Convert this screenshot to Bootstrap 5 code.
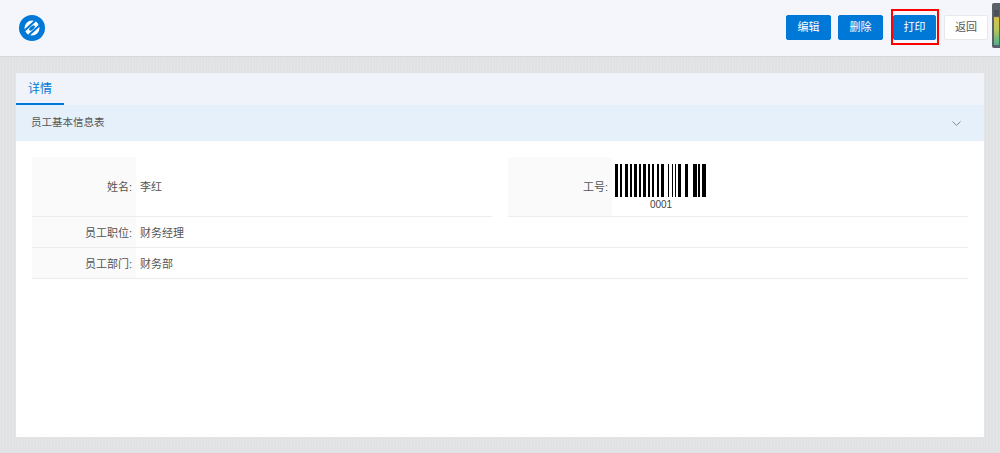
<!DOCTYPE html>
<html lang="zh-CN">
<head>
    <meta charset="UTF-8">
    <title>员工基本信息表</title>
    <link rel="stylesheet" href="https://cdn.jsdelivr.net/npm/bootstrap@5.3.0/dist/css/bootstrap.min.css">
    <style>
        html, body { height: 453px; overflow: hidden; }
        body {
            font-family: "Liberation Sans", "Noto Sans CJK SC", sans-serif;
            font-size: 11px;
            color: #555;
            background-color: #e2e3e5;
            background-image:
                repeating-linear-gradient(90deg, rgba(255,255,255,.10) 0 1px, transparent 1px 3px),
                repeating-linear-gradient(0deg, rgba(0,0,0,.012) 0 1px, transparent 1px 2px);
        }
        .top-bar { height: 57px; padding-top: 9px; background: #f4f6fb; border-bottom: 1px solid #d6d7d9; }
        .brand-logo { width: 26px; height: 26px; margin: 6px 0 0 19px; }
        .act-btn {
            width: 45px; height: 25px; padding: 0; font-size: 11px; line-height: 23px;
            border-radius: 2px; background: #0078d7; border: 1px solid #0078d7; color: #fff;
        }
        .act-gap { margin: 6px 7px 0 0; }
        .act-gap-wide { margin-right: 8px; }
        .act-outline {
            width: 44px; height: 25px; margin: 6px 4px 0 0; padding: 0; font-size: 11px; line-height: 23px;
            border-radius: 2px; background: #fff; border: 1px solid #e6e8ec; color: #555;
        }
        .print-mark { height: 36px; margin-right: 5px; padding: 4px 1px 3px 0; border: 2px solid #f00; }
        .print-mark .act-btn { display: block; width: 43px; }
        .meter {
            width: 8px; height: 45px; margin-top: -6px; background: #5a6068;
            border-radius: 2px 0 0 2px; padding: 7px 1px 3px 2px;
        }
        .meter-fill {
            height: 100%;
            background: linear-gradient(#4a5058 0 18%, #d5c04c 22%, #b9c65a 55%, #4fb08c 100%);
        }
        .sheet { margin: 16px 16px 0; height: 364px; background: #fff; }
        .tab-row { height: 32px; background: #f0f3f9; }
        .tab-on {
            width: 48px; height: 32px; padding-top: 1px; line-height: 30px; text-align: center;
            color: #0078d7; font-size: 12px; border-bottom: 2px solid #0078d7;
        }
        .sec-head { height: 36px; padding: 0 23px 0 15px; font-size: 10.500px; background: #e6f0fa; color: #555; }
        .form-wrap { padding: 16px 16px 0; }
        .info-row { border-bottom: 1px solid #ececec; }
        .info-label {
            width: 104px; flex: none; padding: 2px 4px 0 0; text-align: right;
            background: #fafafa; color: #555;
        }
        .info-val { padding: 2px 0 0 4px; color: #555; }
        .row-tall { height: 60px; }
        .row-std { height: 31px; }
        .code-num { margin-top: 2px; font-size: 10px; line-height: 11px; color: #444; text-align: center; width: 92px; }
        .code-wrap { padding: 7px 0 0 3px; }
    </style>
</head>
<body>
    <div class="top-bar d-flex align-items-start justify-content-between">
        <svg class="brand-logo" viewBox="0 0 26 26">
            <circle cx="13" cy="13" r="13" fill="#0078d7"/>
            <circle cx="13" cy="13" r="7.500" fill="#fff"/>
            <path d="M4 17 L16 6" stroke="#0078d7" stroke-width="2"/>
            <path d="M10 20 L22 9" stroke="#0078d7" stroke-width="2"/>
            <ellipse cx="13" cy="13" rx="3.500" ry="1.600" transform="rotate(-42 13 13)" fill="#0078d7"/>
        </svg>
        <div class="d-flex align-items-start">
            <button class="btn act-btn act-gap" type="button">编辑</button>
            <button class="btn act-btn act-gap act-gap-wide" type="button">删除</button>
            <div class="print-mark"><button class="btn act-btn" type="button">打印</button></div>
            <button class="btn act-outline" type="button">返回</button>
            <div class="meter"><div class="meter-fill"></div></div>
        </div>
    </div>

    <div class="sheet">
        <div class="tab-row"><div class="tab-on">详情</div></div>
        <div class="sec-head d-flex align-items-center justify-content-between">
            <span>员工基本信息表</span>
            <svg width="9" height="5" viewBox="0 0 9 5"><path d="M.5.5 4.500 4.500 8.500.5" fill="none" stroke="#888" stroke-width="1"/></svg>
        </div>
        <div class="form-wrap">
            <div class="row g-0 gap-3 flex-nowrap">
                <div class="col d-flex info-row row-tall">
                    <div class="info-label d-flex align-items-center justify-content-end">姓名:</div>
                    <div class="info-val d-flex align-items-center">李红</div>
                </div>
                <div class="col d-flex info-row row-tall">
                    <div class="info-label d-flex align-items-center justify-content-end">工号:</div>
                    <div class="code-wrap">
                        <svg id="barcode" class="d-block" width="92" height="33"></svg>
                        <div class="code-num">0001</div>
                    </div>
                </div>
            </div>
            <div class="d-flex info-row row-std">
                <div class="info-label d-flex align-items-center justify-content-end">员工职位:</div>
                <div class="info-val d-flex align-items-center">财务经理</div>
            </div>
            <div class="d-flex info-row row-std">
                <div class="info-label d-flex align-items-center justify-content-end">员工部门:</div>
                <div class="info-val d-flex align-items-center">财务部</div>
            </div>
        </div>
    </div>
<script>
// bar x / width, read off the picture
const bars = [[0,3],[5,2],[10,3],[15,2],[19,3],[24,2],[28,3],[33,2],[37,2],[42,2],[46,3],[53,1],[57,1],[60,1],[63,3],[70,3],[78,4],[83,2],[87,4]];
document.getElementById("barcode").innerHTML = bars.map(b => `<rect x="${b[0]}" y="0" width="${b[1]}" height="33" fill="#000"/>`).join("");
</script>
<script src="https://cdn.jsdelivr.net/npm/bootstrap@5.3.0/dist/js/bootstrap.bundle.min.js"></script>
</body>
</html>
